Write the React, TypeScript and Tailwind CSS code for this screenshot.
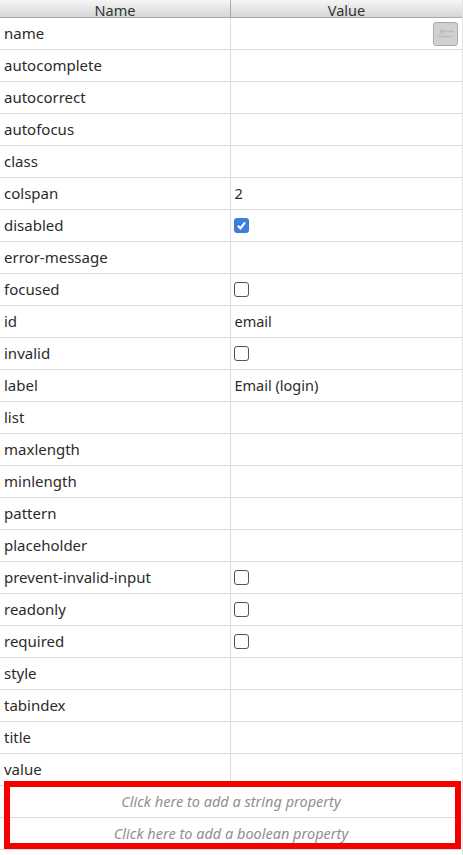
import React from 'react';

type Row = { name: string; value?: string; check?: boolean };

const rows: Row[] = [
  { name: 'name' },
  { name: 'autocomplete' },
  { name: 'autocorrect' },
  { name: 'autofocus' },
  { name: 'class' },
  { name: 'colspan', value: '2' },
  { name: 'disabled', check: true },
  { name: 'error-message' },
  { name: 'focused', check: false },
  { name: 'id', value: 'email' },
  { name: 'invalid', check: false },
  { name: 'label', value: 'Email (login)' },
  { name: 'list' },
  { name: 'maxlength' },
  { name: 'minlength' },
  { name: 'pattern' },
  { name: 'placeholder' },
  { name: 'prevent-invalid-input', check: false },
  { name: 'readonly', check: false },
  { name: 'required', check: false },
  { name: 'style' },
  { name: 'tabindex' },
  { name: 'title' },
  { name: 'value' },
];

const Check = ({ on }: { on: boolean }) =>
  on ? (
    <span className="-mt-px -ml-[0.5px] flex h-[15px] w-[15px] shrink-0 items-center justify-center rounded-[3px] bg-[#3d7ddb]">
      <svg viewBox="0 0 15 15" className="h-[15px] w-[15px]" fill="none" stroke="#ffffff" strokeWidth={2.2}>
        <path d="M3.8 7.8 L6.4 10.4 L11 4.4" />
      </svg>
    </span>
  ) : (
    <span className="-mt-px -ml-[0.5px] block h-[15px] w-[15px] shrink-0 rounded-[3px] border border-[#555555] bg-white" />
  );

export default function App() {
  return (
    <div className="relative h-[855px] w-[463px] overflow-hidden border-r border-[#e2e2e2] bg-white font-['Noto_Sans',sans-serif] text-[15px] text-[#2b2b2b]">
      {/* header */}
      <div className="flex h-[18px] border-b border-[#a9a9a9] bg-gradient-to-b from-[#f6f6f6] to-[#d6d6d6] pt-[2px] text-[14.5px] leading-[16px] text-[#333333]">
        <div className="w-[230px] text-center">Name</div>
        <div className="-mt-[2px] flex-1 border-l border-[#a9a9a9] pt-[2px] text-center">Value</div>
      </div>

      {rows.map((r) => (
        <div key={r.name} className="flex h-[32px] border-b border-[#dcdcdc]">
          <div className="flex w-[230px] items-center pl-1">{r.name}</div>
          <div className="relative flex flex-1 items-center border-l border-[#dcdcdc] pl-[3.5px] text-[14.5px]">
            {r.value}
            {r.check !== undefined && <Check on={r.check} />}
            {r.name === 'name' && (
              <span className="absolute right-[4px] top-[4px] flex h-[24px] w-[25px] items-center justify-center rounded-[3px] border border-[#ababab] bg-[#d0d0d0]">
                <svg viewBox="0 0 18 12" className="h-[12px] w-[18px]" fill="none" stroke="#bcbcbc" strokeWidth={1.5}>
                  <path d="M3 3.5 H17 M3 3.5 L6 1 M3 3.5 L6 6 M1 8.5 H15" />
                </svg>
              </span>
            )}
          </div>
        </div>
      ))}

      {/* add property rows */}
      <div className="flex h-[32px] items-center justify-center border-b border-[#dcdcdc] text-[14.5px] italic text-[#8f8f8f]">
        Click here to add a string property
      </div>
      <div className="flex h-[32px] items-center justify-center border-b border-[#dcdcdc] text-[14.5px] italic text-[#8f8f8f]">
        Click here to add a boolean property
      </div>

      {/* red highlight over the two rows */}
      <div className="absolute left-[4px] top-[781px] h-[68px] w-[457px] border-[6px] border-[#f50000]" />
    </div>
  );
}
